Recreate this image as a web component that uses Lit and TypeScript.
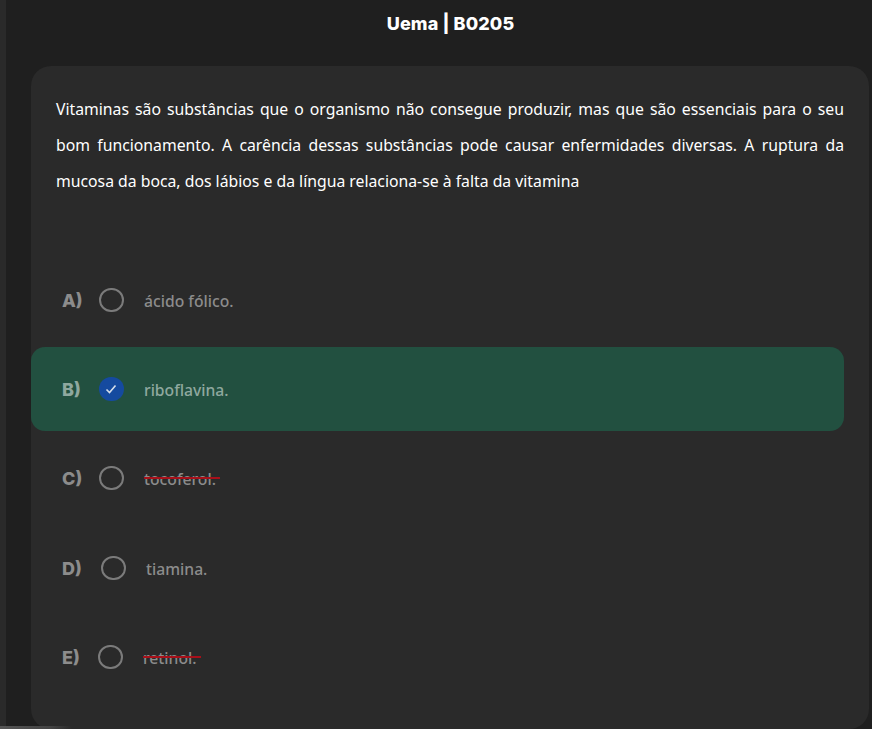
import { LitElement, html, css } from "lit";
import { customElement } from "lit/decorators.js";

const options = [
  { l: "A)", w: 20, t: "ácido fólico." },
  { l: "B)", w: 20, t: "riboflavina.", sel: true },
  { l: "C)", w: 20, t: "tocoferol.", cut: true },
  { l: "D)", w: 22, t: "tiamina." },
  { l: "E)", w: 19, t: "retinol.", cut: true },
];

@customElement("app-root")
export class AppRoot extends LitElement {
  static styles = css`
    :host { display: block; height: 729px; overflow: hidden; background: #2a2a2a; position: relative; font-family: "Noto Sans", "Open Sans", sans-serif; }
    .main { margin-left: 6px; height: 729px; background: #1f1f1f; padding-left: 25px; padding-right: 3px; box-sizing: border-box; }
    .title { height: 66px; padding-top: 12px; box-sizing: border-box; text-align: center; color: #fff; font: 800 18px/24px Inter, sans-serif; letter-spacing: 0.12px; margin-right: -3px; margin-left: -2px; }
    .card { background: #2a2a2a; border-radius: 20px; height: 663px; box-sizing: border-box; padding: 25px 25px 0 0; }
    .q { margin: 0 0 59px 25px; color: #fff; font-size: 15.78px; line-height: 36px; text-align: justify; height: 108px; }
    .opts { display: flex; flex-direction: column; gap: 5px; }
    .opt { height: 84px; display: flex; align-items: center; padding-left: 31px; border-radius: 14px; color: #8c8c8c; }
    .opt:nth-child(4) { margin-top: 1px; }
    .opt.sel { background: #225040; color: #8fa89f; }
    .letter { font: 800 18px/24px Inter, sans-serif; margin: 2px 17px 0 0; flex: none; white-space: nowrap; }
    .radio { width: 24.5px; height: 24.5px; box-sizing: border-box; border: 2px solid #7b7b7b; border-radius: 50%; margin-right: 20.5px; flex: none; display: flex; align-items: center; justify-content: center; }
    .sel .radio { background: #154a9f; border: none; }
    .txt { font-size: 15.7px; font-weight: 500; line-height: 24px; position: relative; margin-top: 2px; }
    .cut::after { content: ""; position: absolute; left: 0; right: -4px; top: 10px; height: 2px; background: #a8101a; }
    .glow { position: absolute; left: 0; bottom: 0; width: 72px; height: 3px; background: linear-gradient(90deg, #555, #444 70%, transparent); }
  `;
  render() {
    return html`<div class="main">
        <div class="title">Uema | B0205</div>
        <div class="card">
          <p class="q">Vitaminas são substâncias que o organismo não consegue produzir, mas que são essenciais para o seu bom funcionamento. A carência dessas substâncias pode causar enfermidades diversas. A ruptura da mucosa da boca, dos lábios e da língua relaciona-se à falta da vitamina</p>
          <div class="opts">
            ${options.map(
              (o) => html`<div class="opt ${o.sel ? "sel" : ""}">
                <span class="letter" style="width:${o.w}px">${o.l}</span>
                <span class="radio">${o.sel
                  ? html`<svg width="14" height="14" viewBox="0 0 14 14" fill="none"><path d="M2.5 7.5l3 3 6-7" stroke="#d6deea" stroke-width="1.6" /></svg>`
                  : ""}</span>
                <span class="txt ${o.cut ? "cut" : ""}">${o.t}</span>
              </div>`
            )}
          </div>
        </div>
      </div>
      <div class="glow"></div>`;
  }
}
